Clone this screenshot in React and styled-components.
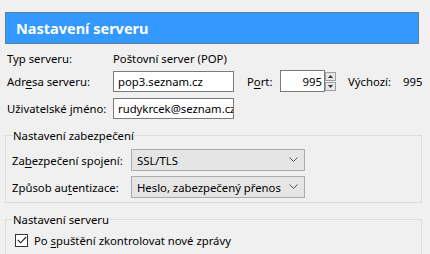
import React from 'react';
import styled, { createGlobalStyle } from 'styled-components';

const GlobalStyle = createGlobalStyle`
    html, body {
        margin: 0;
        padding: 0;
        background: #f0f0f0;
    }
    body {
        font-family: "Noto Sans", "Open Sans", sans-serif;
        font-size: 11.3px;
        color: #000;
    }
`;

const Page = styled.div`
    width: 430px;
    height: 254px;
    overflow: hidden;
    padding: 12px 8px 0 5px;
    box-sizing: border-box;
`;

const Header = styled.div`
    width: 414px;
    height: 32px;
    box-sizing: border-box;
    background: #3399ff;
    border: 1px solid #5f7f9f;
    color: #fff;
    font-size: 14.5px;
    font-weight: bold;
    display: flex;
    align-items: center;
    padding-left: 10px;
`;

const Row = styled.div`
    display: flex;
    align-items: center;
    height: ${p => p.h || 22}px;
    margin-top: ${p => p.mt || 0}px;
    padding-left: ${p => p.indent ?? 2}px;
    white-space: nowrap;
`;

const Label = styled.span`
    width: ${p => p.w}px;
    margin-left: ${p => p.ml || 0}px;
    flex: none;
    white-space: nowrap;
`;

const Key = styled.span`
    text-decoration: underline;
    text-underline-offset: 2px;
`;

const TextInput = styled.div`
    flex: none;
    width: ${p => p.w}px;
    height: ${p => p.h || 21}px;
    box-sizing: border-box;
    background: #fff;
    border: 1px solid #7a7a7a;
    display: flex;
    align-items: center;
    justify-content: ${p => (p.right ? 'flex-end' : 'flex-start')};
    padding: 0 2px 0 4px;
    overflow: hidden;
    white-space: nowrap;
`;

const PortBox = styled.div`
    flex: none;
    display: flex;
    align-items: stretch;
`;

const Spinner = styled.div`
    width: 11px;
    display: flex;
    flex-direction: column;
    justify-content: center;
    gap: 1px;
`;

const SpinButton = styled.div`
    height: 9px;
    background: #e6e6e6;
    border: 1px solid #a0a0a0;
    box-sizing: border-box;
    display: flex;
    align-items: center;
    justify-content: center;
`;

const Group = styled.fieldset`
    margin: ${p => p.mt || 0}px 0 0 0;
    width: 417px;
    box-sizing: border-box;
    border: 1px solid #dcdcdc;
    padding: 2px 0 ${p => p.pb || 0}px 6px;
    min-height: ${p => p.minh || 0}px;
`;

const Legend = styled.legend`
    padding: 0 1px;
    margin-left: 0;
`;

const Select = styled.div`
    flex: none;
    width: 174px;
    height: 22px;
    box-sizing: border-box;
    background: #e5e5e5;
    border: 1px solid #acacac;
    display: flex;
    align-items: center;
    justify-content: space-between;
    padding: 0 6px 0 5px;
    white-space: nowrap;
`;

const Check = styled.div`
    width: 13px;
    height: 13px;
    box-sizing: border-box;
    border: 1px solid #333;
    background: #fff;
    display: flex;
    align-items: center;
    justify-content: center;
    margin-right: 6px;
`;

const Chevron = () => (
    <svg width="9" height="6" viewBox="0 0 9 6">
        <path d="M0.5 0.5 L4.5 4.5 L8.5 0.5" fill="none" stroke="#555" strokeWidth="1" />
    </svg>
);

const Arrow = ({ up }) => (
    <svg width="5" height="3" viewBox="0 0 5 3">
        <path d={up ? 'M0 3 L2.5 0 L5 3 Z' : 'M0 0 L2.5 3 L5 0 Z'} fill="#333" />
    </svg>
);

const App = () => (
    <Page>
        <GlobalStyle />
        <Header>Nastavení serveru</Header>

        <Row h={18} mt={5}>
            <Label w={106}>Typ serveru:</Label>
            <span>Poštovní server (POP)</span>
        </Row>

        <Row mt={3}>
            <Label w={106}>Adr<Key>e</Key>sa serveru:</Label>
            <TextInput w={121}>pop3.seznam.cz</TextInput>
            <Label w={33} ml={13}>P<Key>o</Key>rt:</Label>
            <PortBox>
                <TextInput w={45} h={22} right>995</TextInput>
                <Spinner>
                    <SpinButton><Arrow up /></SpinButton>
                    <SpinButton><Arrow /></SpinButton>
                </Spinner>
            </PortBox>
            <Label w={55} ml={12}>Výchozí:</Label>
            <span>995</span>
        </Row>

        <Row h={21} mt={6}>
            <Label w={106}>Uživatelské jméno:</Label>
            <TextInput w={121}>rudykrcek@seznam.cz</TextInput>
        </Row>

        <Group mt={9} pb={4}>
            <Legend>Nastavení zabezpečení</Legend>
            <Row indent={0} mt={4}>
                <Label w={119}>Za<Key>b</Key>ezpečení spojení:</Label>
                <Select>SSL/TLS<Chevron /></Select>
            </Row>
            <Row indent={0} mt={5}>
                <Label w={119}>Způsob au<Key>t</Key>entizace:</Label>
                <Select>Heslo, zabezpečený přenos<Chevron /></Select>
            </Row>
        </Group>

        <Group mt={9} minh={60}>
            <Legend>Nastavení serveru</Legend>
            <Row indent={3} mt={3} h={16}>
                <Check>
                    <svg width="10" height="8" viewBox="0 0 10 8">
                        <path d="M0.8 4 L3.6 6.8 L9.2 1" fill="none" stroke="#222" strokeWidth="1.1" />
                    </svg>
                </Check>
                <span>Po <Key>s</Key>puštění zkontrolovat nové zprávy</span>
            </Row>
        </Group>
    </Page>
);

export default App;
